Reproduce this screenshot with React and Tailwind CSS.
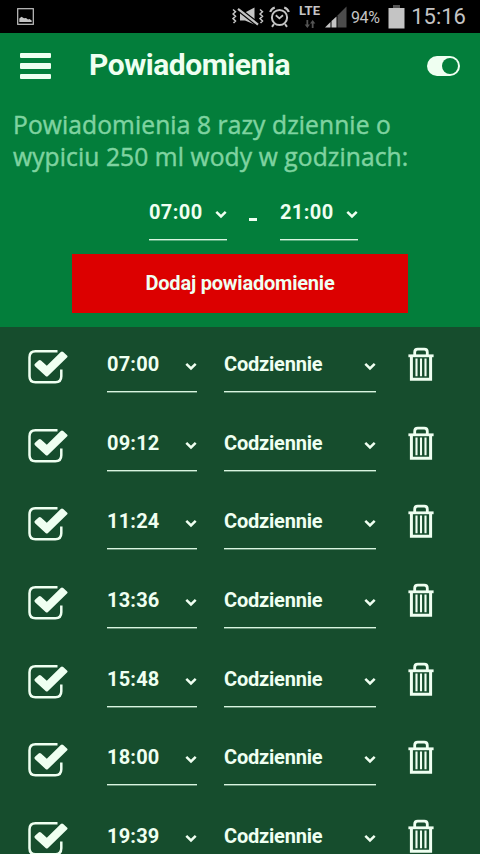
import React, { useState } from "react";

const INITIAL_ALARMS = [
  { id: 1, time: "07:00", repeat: "Codziennie", enabled: true },
  { id: 2, time: "09:12", repeat: "Codziennie", enabled: true },
  { id: 3, time: "11:24", repeat: "Codziennie", enabled: true },
  { id: 4, time: "13:36", repeat: "Codziennie", enabled: true },
  { id: 5, time: "15:48", repeat: "Codziennie", enabled: true },
  { id: 6, time: "18:00", repeat: "Codziennie", enabled: true },
  { id: 7, time: "19:39", repeat: "Codziennie", enabled: true },
];

const Chevron = () => (
  <svg width="12" height="9" viewBox="0 0 12 9" fill="none" className="shrink-0">
    <path d="M1.3 1.8 L6 6.4 L10.7 1.8" stroke="currentColor" strokeWidth="2.5" />
  </svg>
);

const CheckBox = ({ checked }) => (
  <svg width="40" height="36" viewBox="0 0 40 36" fill="none">
    <path
      d="M29.5 2.3 H7.5 Q1.5 2.3 1.5 8.3 V27.3 Q1.5 33.3 7.5 33.3 H27.3 Q33.3 33.3 33.3 27.3 V20.5"
      stroke="currentColor"
      strokeWidth="2.5"
    />
    {checked && (
      <path
        d="M7 14.8 L10.6 11.4 Q11.8 10.4 13 11.4 L18.8 16.8 L32.8 3 Q34 2 35.2 3 L39 6.4 Q40.1 7.5 39 8.6 L20 27 Q18.8 28 17.6 27 L7 17.2 Q5.9 16 7 14.8 Z"
        fill="currentColor"
      />
    )}
  </svg>
);

const Trash = () => (
  <svg width="26" height="36" viewBox="0 0 26 36" fill="none" stroke="currentColor">
    <path d="M6.7 8 V5.2 Q6.7 2.2 9.7 2.2 H16.3 Q19.3 2.2 19.3 5.2 V8" strokeWidth="2.8" />
    <path d="M0.4 8.8 H25.6" strokeWidth="2.8" />
    <path d="M3.4 9 V32.2 H22.6 V9" strokeWidth="3" />
    <path d="M8.5 11.5 V29.3 M13 11.5 V29.3 M17.5 11.5 V29.3" strokeWidth="2.1" />
  </svg>
);

const Select = ({ value, className, textClass }) => (
  <button
    className={`flex items-start justify-between border-b border-[#d9f5e0] shadow-[0_1px_0_#d9f5e066] text-left ${className}`}
  >
    <span className={`text-[20px] leading-6 font-bold ${textClass}`}>{value}</span>
    <span className="mt-[10px]">
      <Chevron />
    </span>
  </button>
);

const StatusBar = () => (
  <div className="h-[33px] bg-black flex items-center pl-[17px] pr-[14px] text-[#c4c4c4]">
    <svg width="17" height="17" viewBox="0 0 17 17" fill="none">
      <rect x="0.7" y="0.7" width="15.6" height="15.6" stroke="currentColor" strokeWidth="1.2" />
      <path d="M2.3 14 V10.5 L4.5 8.8 L7 10.3 L9 10 L11 11.6 L12.5 11 L14.7 12.6 V14 Z" fill="currentColor" />
    </svg>

    {/* muted + vibrate */}
    <svg width="32" height="22" viewBox="0 0 32 22" fill="none" className="ml-[198px]">
      <path
        d="M1 3.5 L3.5 5.7 L1 8 L3.5 10.3 L1 12.6 L3.5 15 L1.5 17 M28 3.5 L30.5 5.7 L28 8 L30.5 10.3 L28 12.6 L30.5 15 L28.5 17"
        stroke="currentColor"
        strokeWidth="1.5"
      />
      <path d="M8 6.5 H13 L22.5 1.5 V18.5 L13 14.5 H8 Z" fill="currentColor" />
      <path d="M5.5 2.5 L26.5 19" stroke="#000" strokeWidth="4.6" />
      <path d="M6 2.8 L26 18.6" stroke="currentColor" strokeWidth="2.2" />
    </svg>

    {/* alarm clock */}
    <svg width="21" height="22" viewBox="0 0 21 22" fill="none" stroke="currentColor" className="ml-[5px]">
      <circle cx="10.5" cy="11.5" r="7.6" strokeWidth="2" />
      <path d="M1.2 6 Q2.3 2.7 5.8 1.5 M19.8 6 Q18.7 2.7 15.2 1.5" strokeWidth="2.2" />
      <path d="M6.8 9.3 L10.4 12.4 L14 9.3" strokeWidth="1.8" />
      <path d="M5 18 L3 20.8 M16 18 L18 20.8" strokeWidth="2" />
    </svg>

    {/* network */}
    <div className="ml-[8px] w-[23px] h-[28px] flex flex-col items-center">
      <span className="text-[13px] leading-[14px] font-bold mt-[1px]">LTE</span>
      <svg width="12" height="8" viewBox="0 0 12 9" className="mt-[2px] text-[#555]" fill="currentColor">
        <path d="M2 0 H4 V5 H6 L3 9 L0 5 H2 Z" />
        <path d="M8 9 H10 V4 H12 L9 0 L6 4 H8 Z" />
      </svg>
    </div>
    <svg width="22" height="22" viewBox="0 0 22 22" className="ml-[4px]">
      <path d="M0 21.5 L5.5 16 V21.5 Z" fill="#c4c4c4" />
      <path d="M6.5 21.5 V15 L11.5 10.5 V21.5 Z" fill="#c4c4c4" />
      <path d="M12.5 21.5 V9.5 L21.5 0.5 V21.5 Z" fill="#4c4c4c" />
    </svg>

    <span className="ml-[4px] mt-[2px] w-[30px] text-[16px] tracking-[-0.4px] whitespace-nowrap">
      94%
    </span>
    <svg width="17" height="25" viewBox="0 0 17 25" fill="currentColor" className="ml-[7px]">
      <rect x="5" y="1" width="7" height="3" fill="#555" />
      <rect x="0.5" y="4" width="16" height="20.5" />
    </svg>
    <span className="ml-auto text-[22px] leading-[33px]">15:16</span>
  </div>
);

const AlarmRow = ({ alarm, onToggle, onDelete }) => (
  <div className="h-[78.7px] shrink-0 flex items-start pl-[28px] pt-[20px]">
    <button className="w-[40px] mt-[2px]" onClick={() => onToggle(alarm.id)}>
      <CheckBox checked={alarm.enabled} />
    </button>
    <Select
      value={alarm.time}
      className="ml-[39px] mt-[5px] w-[90px] h-[40px]"
      textClass="tracking-[0.2px]"
    />
    <Select
      value={alarm.repeat}
      className="ml-[27px] mt-[5px] w-[152px] h-[40px]"
      textClass="tracking-[-0.2px]"
    />
    <button className="ml-[32px]" onClick={() => onDelete(alarm.id)}>
      <Trash />
    </button>
  </div>
);

const App = () => {
  const [alarms, setAlarms] = useState(INITIAL_ALARMS);
  const [active, setActive] = useState(true);

  const toggleAlarm = (id) => {
    setAlarms((prev) => prev.map((a) => (a.id === id ? { ...a, enabled: !a.enabled } : a)));
  };

  const deleteAlarm = (id) => {
    setAlarms((prev) => prev.filter((a) => a.id !== id));
  };

  const addAlarm = () => {
    setAlarms((prev) => [
      ...prev,
      { id: Date.now(), time: "21:00", repeat: "Codziennie", enabled: true },
    ]);
  };

  return (
    <div className="w-[480px] h-[854px] overflow-hidden flex flex-col bg-[#164d2d] text-[#effff1] font-['Roboto',sans-serif]">
      <StatusBar />

      <div className="h-[294px] shrink-0 bg-[#037e3b] flex flex-col">
        <div className="h-[66px] flex items-center pl-[20px] pr-[20px]">
          <button className="w-[31px] flex flex-col gap-[5px]">
            <span className="h-[5.5px] rounded-[1px] bg-current" />
            <span className="h-[5.5px] rounded-[1px] bg-current" />
            <span className="h-[5.5px] rounded-[1px] bg-current" />
          </button>
          <h1 className="ml-[38px] mb-[2px] text-[30px] leading-9 font-bold tracking-[-0.45px]">
            Powiadomienia
          </h1>
          <button
            className={`ml-auto w-[33px] h-[20px] rounded-full bg-current p-[2px] flex items-center ${
              active ? "justify-end" : "justify-start"
            }`}
            onClick={() => setActive(!active)}
          >
            <span className="w-[16px] h-[16px] rounded-full bg-[#037e3b]" />
          </button>
        </div>

        <p className="mt-[10px] pl-[13px] text-[24.6px] leading-[32px] tracking-[0.1px] text-[#7fd3a0] font-['Open_Sans',sans-serif] [-webkit-text-stroke:0.45px_#7fd3a0] whitespace-nowrap">
          Powiadomienia 8 razy dziennie o
          <br />
          wypiciu 250 ml wody w godzinach:
        </p>

        <div className="mt-[27px] pl-[149px] flex">
          <Select value="07:00" className="w-[78px] h-[40px]" textClass="tracking-[0.4px]" />
          <span className="w-[8px] h-[3px] mt-[18px] ml-[22px] mr-[23px] bg-current" />
          <Select value="21:00" className="w-[78px] h-[40px]" textClass="tracking-[0.4px]" />
        </div>

        <button
          className="mt-[14px] mx-[72px] h-[59px] pb-[2px] bg-[#dc0000] text-[20px] font-bold tracking-[-0.2px]"
          onClick={addAlarm}
        >
          Dodaj powiadomienie
        </button>
      </div>

      <div className="flex-1 overflow-hidden flex flex-col">
        {alarms.map((alarm) => (
          <AlarmRow key={alarm.id} alarm={alarm} onToggle={toggleAlarm} onDelete={deleteAlarm} />
        ))}
      </div>
    </div>
  );
};

export default App;
